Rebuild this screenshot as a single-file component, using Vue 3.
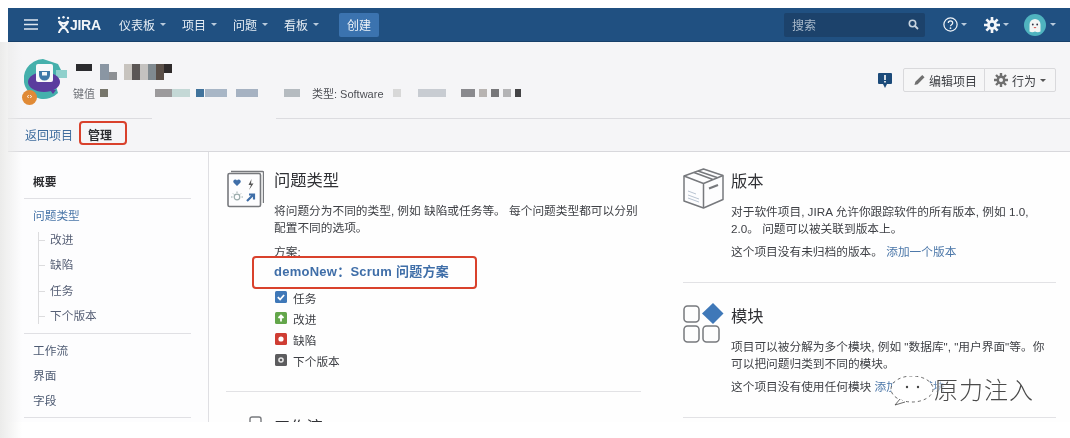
<script setup>
const navItems = ['仪表板', '项目', '问题', '看板']
const titleBlocks = [
  { w: 16, h: 7, c: '#2b2b2e', m: 0, t: 0 },
  { w: 9, h: 16, c: '#8a96a3', m: 8, t: 0 },
  { w: 8, h: 8, c: '#8d9094', m: 0, t: 8 },
  { w: 8, h: 16, c: '#c8c4bf', m: 7, t: 0 },
  { w: 8, h: 16, c: '#5b5655', m: 0, t: 0 },
  { w: 8, h: 16, c: '#c4c2c0', m: 0, t: 0 },
  { w: 8, h: 16, c: '#808a90', m: 0, t: 0 },
  { w: 8, h: 16, c: '#5a4f48', m: 0, t: 0 },
  { w: 8, h: 9, c: '#2f2b2b', m: 0, t: 0 },
]
const keyBlocks = [
  { w: 8, c: '#77766c', m: 5 },
  { w: 17, c: '#9c9a9c', m: 47 },
  { w: 18, c: '#c4d8d6', m: 0 },
  { w: 8, c: '#41739c', m: 6 },
  { w: 22, c: '#a8b6c6', m: 1 },
  { w: 22, c: '#a6b2c2', m: 9 },
  { w: 16, c: '#b5bbc0', m: 26 },
]
const tailBlocks = [
  { w: 8, c: '#d8d8d8', m: 9 },
  { w: 28, c: '#c8ccd2', m: 17 },
  { w: 14, c: '#8a8a8e', m: 15 },
  { w: 8, c: '#b8b4b2', m: 4 },
  { w: 8, c: '#77777a', m: 4 },
  { w: 8, c: '#b4b4b6', m: 4 },
  { w: 6, c: '#444446', m: 4 },
]
const subItems = ['改进', '缺陷', '任务', '下个版本']
const sideItems = ['工作流', '界面', '字段']
const issueTypes = [
  { key: 'task', label: '任务' },
  { key: 'up', label: '改进' },
  { key: 'bug', label: '缺陷' },
  { key: 'next', label: '下个版本' },
]
</script>

<template>
  <div class="page">
    <div class="shell">
      <nav class="nav">
        <svg class="burger" width="14" height="11" viewBox="0 0 14 11"><path d="M0 1h14M0 5.500h14M0 10h14" stroke="#dfe8f1" stroke-width="1.500" fill="none" /></svg>
        <div class="logo">
          <svg width="13" height="18" viewBox="0 0 13 18">
            <g fill="#f2f5f8"><circle cx="2" cy="2" r="1.200" /><circle cx="6.500" cy="1.300" r="1.200" /><circle cx="11" cy="2" r="1.200" /></g>
            <path d="M2 5c2 3 7 3 9 0M2 17c0-5 9-7 9-12M11 17c0-5-9-7-9-12" stroke="#f2f5f8" stroke-width="2" fill="none" />
          </svg>
          <span>JIRA</span>
        </div>
        <a v-for="item in navItems" :key="item" class="nav-item">{{ item }}<i class="caret light" /></a>
        <button class="create">创建</button>
        <div class="nav-right">
          <div class="search">
            <span>搜索</span>
            <svg width="11" height="11" viewBox="0 0 11 11"><circle cx="4.500" cy="4.500" r="3.200" stroke="#c8d4e0" stroke-width="1.600" fill="none" /><path d="M7 7l3 3" stroke="#c8d4e0" stroke-width="1.800" /></svg>
          </div>
          <div class="nav-icon help">
            <svg width="15" height="15" viewBox="0 0 17 17"><circle cx="8.500" cy="8.500" r="7.500" stroke="#f0f4f8" stroke-width="1.400" fill="none" /><path d="M6 6.800c0-3.300 5-3.300 5 0 0 2-2.500 1.800-2.500 3.600" stroke="#f0f4f8" stroke-width="1.400" fill="none" /><circle cx="8.500" cy="12.700" r="1" fill="#f0f4f8" /></svg>
            <i class="caret light" />
          </div>
          <div class="nav-icon gear">
            <svg width="16" height="16" viewBox="0 0 17 17"><circle cx="8.500" cy="8.500" r="5.200" fill="#f4f6f9" /><g stroke="#f4f6f9" stroke-width="2.800"><path d="M8.500 0v17M0 8.500h17M2.500 2.500l12 12M14.500 2.500l-12 12" /></g><circle cx="8.500" cy="8.500" r="2.300" fill="#205081" /></svg>
            <i class="caret light" />
          </div>
          <div class="nav-icon user">
            <svg width="22" height="22" viewBox="0 0 22 22"><circle cx="11" cy="11" r="11" fill="#4fb3bf" /><path d="M5.500 17.500V10.500a5.500 5.500 0 0 1 11 0v7q-2.700 1.500-5.500 0-2.700 1.500-5.500 0z" fill="#f3f6f4" /><circle cx="8.800" cy="10.500" r=".9" fill="#334" /><circle cx="13.200" cy="10.500" r=".9" fill="#334" /><path d="M9.500 13h3l-1.500 1.500z" fill="#d9534f" /></svg>
            <i class="caret light" />
          </div>
        </div>
      </nav>

      <header class="head">
        <div class="project">
          <div class="avatar">
            <svg width="46" height="46" viewBox="0 0 46 46">
              <path d="M19 1 A20 20 0 1 0 34 35 L30 22 L38 14 L34 6z" fill="#45b0ac" />
              <rect x="32" y="12" width="11" height="8" fill="#8fd0cc" />
              <ellipse cx="20" cy="24" rx="16" ry="10" fill="#5a3d9e" />
              <path d="M26 32l6 0-3 4z" fill="#5a3d9e" />
              <rect x="12" y="6" width="17" height="18" rx="2" fill="#f7f8fa" />
              <path d="M15 13h11v4a5.500 5.500 0 0 1-11 0z" fill="#3f78a8" />
              <rect x="18" y="14" width="5" height="3.500" fill="#f4f6f8" />
            </svg>
            <span class="badge">‹›</span>
          </div>
          <div class="meta">
            <div class="title-row">
              <i v-for="(b, i) in titleBlocks" :key="i" :style="{ width: b.w + 'px', height: b.h + 'px', background: b.c, marginLeft: b.m + 'px', marginTop: b.t + 'px' }" />
            </div>
            <div class="key-row">
              <span class="key-label">键值</span>
              <i v-for="(b, i) in keyBlocks" :key="'k' + i" :style="{ width: b.w + 'px', background: b.c, marginLeft: b.m + 'px' }" />
              <span class="type-label">类型: Software</span>
              <i v-for="(b, i) in tailBlocks" :key="'t' + i" :style="{ width: b.w + 'px', background: b.c, marginLeft: b.m + 'px' }" />
            </div>
          </div>
          <div class="actions">
            <svg class="flag" width="14" height="15" viewBox="0 0 14 15"><path d="M1 0h12a1 1 0 0 1 1 1v9a1 1 0 0 1-1 1H9l-2 4-2-4H1a1 1 0 0 1-1-1V1a1 1 0 0 1 1-1z" fill="#1b4a7a" /><path d="M6.200 2h1.600v5H6.200zM6.200 8h1.600v1.600H6.200z" fill="#fff" /></svg>
            <div class="btns">
              <button class="btn edit">
                <svg width="11" height="12" viewBox="0 0 12 12"><path d="M9 0.500l2.500 2.500L4 10.500 0.500 11.500 1.500 8z" fill="#707070" /></svg>
                编辑项目
              </button>
              <button class="btn act">
                <svg width="14" height="14" viewBox="0 0 14 14"><circle cx="7" cy="7" r="4.400" fill="#6f6f6f" /><g stroke="#6f6f6f" stroke-width="2.400"><path d="M7 0v14M0 7h14M2 2l10 10M12 2L2 12" /></g><circle cx="7" cy="7" r="2" fill="#f5f5f7" /></svg>
                行为<i class="caret dark" />
              </button>
            </div>
          </div>
        </div>
        <div class="rule-row"><i class="rule-a" /><i class="rule-b" /></div>
        <div class="tabs">
          <a class="tab">返回项目</a>
          <a class="tab active">管理<b class="mark tab-mark" /></a>
        </div>
      </header>

      <div class="body">
        <aside class="side">
          <div class="side-top">概要</div>
          <div class="side-group first">
            <a class="side-link blue">问题类型</a>
            <ul class="tree">
              <li v-for="s in subItems" :key="s">{{ s }}</li>
            </ul>
          </div>
          <div class="side-group second">
            <a v-for="s in sideItems" :key="s" class="side-link">{{ s }}</a>
          </div>
        </aside>

        <main class="main">
          <div class="col left">
            <section class="card types">
              <svg class="card-icon" width="37" height="38" viewBox="0 0 37 38" fill="none">
                <path d="M4 1.500h31.500a1 1 0 0 1 1 1V33" stroke="#77797d" stroke-width="1.400" />
                <rect x="1" y="3.500" width="32.500" height="33" rx="1.500" fill="#fdfdfe" stroke="#77797d" stroke-width="1.600" />
                <path d="M10 16L6.500 12.500a2 2 0 0 1 3.500-2 2 2 0 0 1 3.500 2z" fill="#3f6ea8" />
                <path d="M24.500 9l-3 6h2.500L22 20l4.500-6.500H24z" fill="#555" />
                <circle cx="10" cy="27" r="2.800" stroke="#9aa" stroke-width="1.200" />
                <path d="M4 27h1.500M14.500 27H16M10 21.500v1.500M6 23.500l1 1M14 23.500l-1 1" stroke="#9aa" />
                <path d="M20 31l6-6M22 24.500h5v5" stroke="#3f6ea8" stroke-width="2.200" />
              </svg>
              <div class="card-body">
                <h2>问题类型</h2>
                <p class="desc">将问题分为不同的类型, 例如 缺陷或任务等。 每个问题类型都可以分别配置不同的选项。</p>
                <div class="scheme-label">方案:</div>
                <a class="scheme">demoNew：Scrum 问题方案<b class="mark scheme-mark" /></a>
                <ul class="types-list">
                  <li v-for="t in issueTypes" :key="t.key">
                    <svg width="12" height="12" viewBox="0 0 12 12">
                      <template v-if="t.key === 'task'"><rect width="12" height="12" rx="1.500" fill="#3f78b8" /><path d="M2.800 6.200l2.300 2.300 4-4.500" stroke="#fff" stroke-width="1.800" fill="none" /></template>
                      <template v-else-if="t.key === 'up'"><rect width="12" height="12" rx="1.500" fill="#63a64a" /><path d="M6 9.500V4M3.500 6L6 3.500 8.500 6" stroke="#fff" stroke-width="1.800" fill="none" /></template>
                      <template v-else-if="t.key === 'bug'"><rect width="12" height="12" rx="1.500" fill="#cf3d33" /><circle cx="6" cy="6" r="2.600" fill="#fff" /></template>
                      <template v-else><rect width="12" height="12" rx="1.500" fill="#5c5c5e" /><circle cx="6" cy="6" r="2.800" fill="#e8e8e8" /><circle cx="6" cy="6" r="1.300" fill="#5c5c5e" /></template>
                    </svg>
                    <span>{{ t.label }}</span>
                  </li>
                </ul>
              </div>
            </section>
            <section class="card workflow">
              <svg class="card-icon small" width="36" height="20" viewBox="0 0 36 20" fill="none"><rect x="24" y="1" width="11" height="19" rx="2" stroke="#77797d" stroke-width="1.400" /></svg>
              <div class="card-body"><h2>工作流</h2></div>
            </section>
          </div>

          <div class="col right">
            <section class="card version">
              <svg class="card-icon" width="41" height="41" viewBox="0 0 41 41" fill="none" stroke="#77797d" stroke-width="1.500" stroke-linejoin="round">
                <path d="M20.500 1L40 7.500v24L20.500 40 1 33V8z" fill="#fdfdfe" />
                <path d="M1 8l19.500 7.500L40 7.500M20.500 15.500V40M11 4.500l19 7M15 3l19 6.500" />
                <path d="M26 20.500l9-3.500" stroke-width="2.200" />
                <path d="M5 23l8 3M5 27l11 4M5 30l11 4" stroke="#b9c4d2" stroke-width="1" />
              </svg>
              <div class="card-body">
                <h2>版本</h2>
                <p class="desc">对于软件项目, JIRA 允许你跟踪软件的所有版本, 例如 1.0, 2.0。 问题可以被关联到版本上。</p>
                <p class="note">这个项目没有未归档的版本。 <a>添加一个版本</a></p>
              </div>
            </section>
            <section class="card modules">
              <svg class="card-icon" width="41" height="41" viewBox="0 0 41 41" fill="none" stroke="#77797d" stroke-width="1.500">
                <rect x="1" y="3" width="15" height="16" rx="3.500" />
                <rect x="1" y="23" width="15" height="16" rx="3.500" />
                <rect x="20" y="23" width="16" height="16" rx="3.500" />
                <path d="M30 0l10.500 10.500L30 21 19 10.500z" fill="#3f78b8" stroke="none" />
              </svg>
              <div class="card-body">
                <h2>模块</h2>
                <p class="desc">项目可以被分解为多个模块, 例如 "数据库", "用户界面"等。你可以把问题归类到不同的模块。</p>
                <p class="note">这个项目没有使用任何模块 <a>添加一个模块</a></p>
              </div>
            </section>
          </div>
        </main>
      </div>
    </div>

    <div class="watermark">
      <svg width="46" height="30" viewBox="0 0 46 30" fill="none">
        <ellipse cx="24" cy="13" rx="21" ry="13" fill="#fff" stroke="#444" stroke-width=".8" stroke-dasharray="3 3" />
        <path d="M12 23l-5 6 10-3" fill="#fff" stroke="#444" stroke-width=".8" />
        <circle cx="19" cy="11" r="1.200" fill="#444" /><circle cx="30" cy="11" r="1.200" fill="#444" />
      </svg>
      <span>原力注入</span>
    </div>
  </div>
</template>

<style>
html, body { margin: 0; background: #fff; }
</style>

<style scoped>
.page {
  position: relative;
  width: 1070px;
  height: 438px;
  overflow: hidden;
  background: #fff;
  font-family: "Liberation Sans", "Noto Sans CJK SC", sans-serif;
  font-size: 11.7px;
  color: #3d3f44;
  filter: blur(0.35px);
}
.page::before {
  content: "";
  position: absolute;
  left: 0;
  top: 42px;
  bottom: 0;
  width: 22px;
  background: linear-gradient(90deg, #ebebea, rgba(255, 255, 255, 0));
  z-index: 2;
}
.shell {
  margin: 8px 0 0 8px;
  height: 414px;
  overflow: hidden;
  background: #fefefe;
}
.nav {
  height: 34px;
  box-sizing: border-box;
  display: flex;
  align-items: center;
  background: #205081;
  border-bottom: 1px solid #17406a;
  padding-left: 16px;
  color: #e6edf4;
  font-size: 12px;
}
.burger { margin-right: 19px; }
.logo {
  display: flex;
  align-items: center;
  gap: 0;
  width: 62px;
  color: #f2f5f8;
  font-size: 14px;
  font-weight: 700;
  letter-spacing: -0.3px;
}
.nav-item {
  display: flex;
  align-items: center;
  margin-right: 16px;
  white-space: nowrap;
}
.caret {
  display: inline-block;
  width: 0;
  height: 0;
  margin-left: 5px;
  border-left: 3px solid transparent;
  border-right: 3px solid transparent;
}
.caret.light { border-top: 3px solid #b9cbdd; }
.caret.dark { border-top: 3px solid #555; }
.create {
  height: 24px;
  width: 40px;
  padding: 0;
  margin-left: 4px;
  border: 0;
  border-radius: 2px;
  background: #3b73af;
  color: #eef3f8;
  font: inherit;
}
.nav-right {
  margin-left: auto;
  display: flex;
  align-items: center;
}
.search {
  width: 141px;
  height: 24px;
  box-sizing: border-box;
  display: flex;
  align-items: center;
  justify-content: space-between;
  padding: 0 6px 0 8px;
  border-radius: 2px;
  background: #1c426b;
  color: #a9bacb;
}
.nav-icon { display: flex; align-items: center; }
.help { margin-left: 18px; }
.gear { margin-left: 17px; }
.user { margin-left: 15px; margin-right: 14px; }
.nav-icon .caret { margin-left: 3px; }
.user .caret { margin-left: 4px; }

.head {
  height: 110px;
  box-sizing: border-box;
  background: #f5f5f7;
  border-bottom: 1px solid #d8d8dc;
  position: relative;
}
.project {
  height: 76px;
  box-sizing: border-box;
  padding: 16px 14px 0 16px;
  display: flex;
  align-items: flex-start;
}
.avatar { position: relative; width: 46px; height: 46px; margin-right: 6px; flex: none; }
.badge {
  position: absolute;
  left: -2px;
  bottom: -1px;
  width: 15px;
  height: 15px;
  border-radius: 50%;
  background: #e08a36;
  color: #fff;
  font-size: 8px;
  line-height: 14px;
  text-align: center;
}
.meta { flex: 1; }
.title-row { display: flex; align-items: flex-start; height: 17px; margin-top: 6px; }
.title-row i { display: block; flex: none; }
.key-row {
  display: flex;
  align-items: center;
  height: 12px;
  margin-top: 6px;
  color: #6f7278;
  font-size: 11px;
  white-space: nowrap;
}
.key-row i { display: block; height: 8px; flex: none; }
.key-label { margin-left: -3px; }
.type-label { margin-left: 12px; color: #4d4f55; font-size: 11px; }
.actions {
  display: flex;
  align-items: center;
  gap: 11px;
  margin-top: 10px;
}
.btns { display: flex; }
.btn {
  height: 24px;
  box-sizing: border-box;
  display: flex;
  align-items: center;
  background: #f6f6f7;
  border: 1px solid #d9d9dc;
  color: #3d3f44;
  font: inherit;
  font-size: 12px;
  white-space: nowrap;
  padding: 0;
}
.edit { width: 82px; padding-left: 10px; gap: 4px; border-radius: 2px 0 0 2px; }
.act { width: 72px; margin-left: -1px; padding-left: 9px; gap: 4px; border-radius: 0 2px 2px 0; }
.act .caret { margin-left: 0; }
.rule-row { display: flex; justify-content: space-between; height: 1px; }
.rule-a { width: 144px; background: #dcdce0; }
.rule-b { width: 794px; background: #dcdce0; }
.tabs {
  display: flex;
  height: 30px;
  align-items: center;
  padding-left: 17px;
  gap: 15px;
  font-size: 12px;
}
.tab { color: #3f6d9e; position: relative; white-space: nowrap; }
.tab.active { color: #2c2d30; font-weight: 700; }
.mark {
  position: absolute;
  box-sizing: border-box;
  border: 2px solid #d9412c;
  border-radius: 4px;
  pointer-events: none;
}
.tab-mark { left: -9px; top: -5px; width: 48px; height: 24px; }

.body { display: flex; height: 270px; }
.side {
  width: 201px;
  box-sizing: border-box;
  flex: none;
  border-right: 1px solid #dfdfe3;
  padding: 20px 17px 0 16px;
  background: #fdfdfe;
}
.side-top {
  padding: 0 0 9px 9px;
  font-weight: 700;
  color: #2c2d30;
  border-bottom: 1px solid #e0e0e4;
}
.side-group { border-bottom: 1px solid #e0e0e4; }
.side-group.first { padding: 9px 0 9px 9px; }
.side-group.second { padding: 9px 0 8px 9px; display: flex; flex-direction: column; gap: 9px; }
.side-link { display: block; line-height: 16px; color: #4d5a72; }
.side-link.blue { color: #4a76a8; }
.tree {
  list-style: none;
  margin: 8px 0 0 5px;
  padding: 0 0 0 11px;
  border-left: 1px solid #dcdcde;
  display: flex;
  flex-direction: column;
  gap: 9.300px;
  color: #565f75;
  line-height: 16px;
}
.tree li { position: relative; }
.tree li::before {
  content: "";
  position: absolute;
  left: -11px;
  top: 8px;
  width: 6px;
  height: 1px;
  background: #dcdcde;
}

.main {
  flex: 1;
  display: flex;
  padding: 16px 14px 0 17px;
  gap: 42px;
}
.col { width: 373px; }
.col.left { width: 415px; }
.card { display: flex; border-bottom: 1px solid #e2e2e5; position: relative; }
.card-icon { flex: none; margin-right: 9px; }
.card-body { flex: 1; min-width: 0; }
h2 {
  margin: 0;
  font-size: 16.300px;
  font-weight: 400;
  line-height: 22px;
  color: #303135;
}
.desc { margin: 11px 0 0; line-height: 17px; }
.types { padding: 0 0 23px 1px; }
.types .card-icon { margin-right: 10px; margin-top: 2px; }
.types h2 { margin-top: 1px; }
.scheme-label { margin-top: 8px; line-height: 16px; }
.scheme {
  display: block;
  position: relative;
  margin-top: 4px;
  line-height: 16px;
  font-weight: 700;
  font-size: 13px;
  letter-spacing: 0.25px;
  color: #3f6ea8;
}
.scheme-mark { left: -22px; top: -8px; width: 225px; height: 33px; }
.types-list { list-style: none; margin: 9px 0 0; padding: 0 0 0 1px; display: flex; flex-direction: column; gap: 5px; }
.types-list li { display: flex; align-items: center; height: 16px; gap: 6px; }
.types-list svg { flex: none; }
.workflow { border: 0; padding-top: 24px; }
.workflow .card-icon { margin-right: 12px; }
.note { margin: 7px 0 0; line-height: 16px; }
.note a { color: #4a76a8; }
.version { padding-bottom: 22px; }
.version .card-icon { margin-right: 7px; }
.version h2 { margin-top: 2px; }
.modules { padding: 20px 0 22px; }
.modules .card-icon { margin-right: 7px; }
.modules h2 { margin-top: 2px; }

.watermark {
  position: absolute;
  left: 888px;
  top: 376px;
  display: flex;
  align-items: center;
  gap: 0;
  z-index: 3;
}
.watermark span {
  font-size: 24px;
  line-height: 30px;
  font-weight: 300;
  letter-spacing: 1px;
  color: #4a4a4a;
  text-shadow: 0 0 2px #fff, 0 0 2px #fff, 0 0 3px #fff;
}
</style>
